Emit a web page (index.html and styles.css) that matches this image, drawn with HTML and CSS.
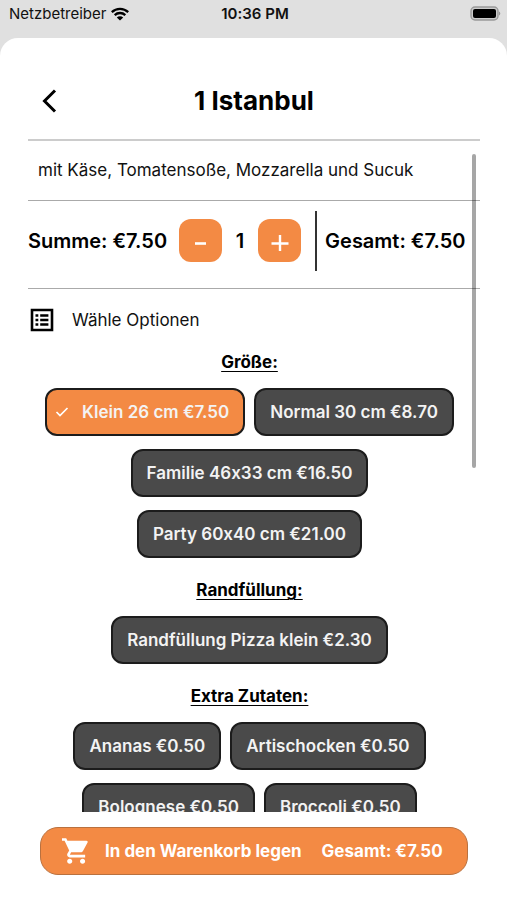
FILE: index.html
```html
<!DOCTYPE html>
<html lang="de">
<head>
<meta charset="utf-8">
<meta name="viewport" content="width=device-width, initial-scale=1">
<title>1 Istanbul</title>
<link rel="stylesheet" href="styles.css">
</head>
<body>
<div class="status">
  <div class="status-left">
    <span>Netzbetreiber</span>
    <svg class="wifi" viewBox="0 0 18 14" width="18" height="14" aria-hidden="true">
      <path d="M0.8 5.1a12 12 0 0 1 16.4 0M3.7 8.1a7.8 7.8 0 0 1 10.6 0" fill="none" stroke="#000" stroke-width="2.3"/>
      <path d="M9 13.6 5.8 10.5a4.6 4.6 0 0 1 6.4 0z"/>
    </svg>
  </div>
  <span class="time">10:36 PM</span>
  <div class="status-right">
    <svg viewBox="0 0 31 16" width="31" height="16" aria-hidden="true">
      <rect x="1" y="1" width="27" height="13" rx="4" fill="#ccc" stroke="#999" stroke-width="1.4"/>
      <rect x="3" y="3" width="23" height="9" rx="2"/>
      <path d="M29 5.5a2.2 2.2 0 0 1 0 4z" fill="#999"/>
    </svg>
  </div>
</div>
<main class="sheet">
  <header class="header">
    <button class="back" aria-label="Zurück">
      <svg viewBox="0 0 16 24" width="16" height="24" aria-hidden="true"><path d="M13 1.5 2.5 12 13 22.5" fill="none" stroke="#000" stroke-width="3"/></svg>
    </button>
    <h1>1 Istanbul</h1>
  </header>
  <div class="content">
    <p class="description">mit Käse, Tomatensoße, Mozzarella und Sucuk</p>
    <div class="amount">
      <span>Summe: €7.50</span>
      <button class="step" aria-label="Weniger"><svg viewBox="0 0 20 20" width="20" height="20" aria-hidden="true"><path d="M4 12.5h11" stroke="#fff" stroke-width="2.6"/></svg></button>
      <output class="count">1</output>
      <button class="step" aria-label="Mehr"><svg viewBox="0 0 20 20" width="20" height="20" aria-hidden="true"><path d="M1.5 12.5h17M10 4v17" stroke="#fff" stroke-width="2.4"/></svg></button>
      <span class="total">Gesamt: €7.50</span>
    </div>
    <div class="options-title">
      <svg viewBox="0 0 24 24" width="24" height="24" aria-hidden="true">
        <path d="M2 2h20v20H2z" fill="none" stroke="#000" stroke-width="2.6"/>
        <path d="M5.5 7.5h2.8M5.5 12h2.8M5.5 16.5h2.8M10.2 7.5h8.2M10.2 12h8.2M10.2 16.5h8.2" stroke="#000" stroke-width="2.4"/>
      </svg>
      <span>Wähle Optionen</span>
    </div>
    <fieldset class="group">
      <legend>Größe:</legend>
      <div class="chips">
        <label class="chip"><input type="radio" name="size" checked><svg class="check" viewBox="0 0 14 12" width="14" height="12" aria-hidden="true"><path d="M1.5 6 5 9.5 12.5 2" fill="none" stroke="#fff" stroke-width="1.7"/></svg>Klein 26 cm €7.50</label>
        <label class="chip"><input type="radio" name="size">Normal 30 cm €8.70</label>
        <label class="chip"><input type="radio" name="size">Familie 46x33 cm €16.50</label>
        <label class="chip"><input type="radio" name="size">Party 60x40 cm €21.00</label>
      </div>
    </fieldset>
    <fieldset class="group">
      <legend>Randfüllung:</legend>
      <div class="chips">
        <label class="chip"><input type="checkbox">Randfüllung Pizza klein €2.30</label>
      </div>
    </fieldset>
    <fieldset class="group">
      <legend>Extra Zutaten:</legend>
      <div class="chips">
        <label class="chip"><input type="checkbox">Ananas €0.50</label>
        <label class="chip"><input type="checkbox">Artischocken €0.50</label>
        <label class="chip"><input type="checkbox">Bolognese €0.50</label>
        <label class="chip"><input type="checkbox">Broccoli €0.50</label>
      </div>
    </fieldset>
    <div class="scrollbar"></div>
  </div>
  <footer class="footer">
    <button class="cart">
      <svg viewBox="1 2 21 20" width="27" height="26" aria-hidden="true"><path fill="#fff" d="M7 18c-1.1 0-1.99.9-1.99 2S5.9 22 7 22s2-.9 2-2-.9-2-2-2zM1 2v2h2l3.6 7.59-1.35 2.45c-.16.28-.25.61-.25.96 0 1.1.9 2 2 2h12v-2H7.42c-.14 0-.25-.11-.25-.25l.03-.12.9-1.63h7.45c.75 0 1.41-.41 1.75-1.03l3.58-6.49A1 1 0 0 0 20 4H5.21l-.94-2H1zm16 16c-1.1 0-1.99.9-1.99 2s.89 2 1.99 2 2-.9 2-2-.9-2-2-2z"/></svg>
      <span class="cart-label">In den Warenkorb legen</span>
      <span>Gesamt: €7.50</span>
    </button>
  </footer>
</main>
</body>
</html>
```
FILE: styles.css
```css
* { box-sizing: border-box; }

body {
  margin: 0;
  height: 100vh;
  display: flex;
  flex-direction: column;
  background: #e0e0e0;
  color: #111;
  font-family: Inter, "Liberation Sans", sans-serif;
  font-size: 17px;
  font-feature-settings: "calt" 0;
  line-height: 24px;
}

button {
  border: 0;
  padding: 0;
  color: inherit;
  font: inherit;
  background: none;
}

svg { display: block; flex: none; }

.status {
  display: grid;
  grid-template-columns: 1fr auto 1fr;
  align-items: center;
  height: 38px;
  padding: 0 6px 10px 9px;
  font-size: 15px;
}

.status-left { display: flex; align-items: center; gap: 5px; }
.status-right { display: flex; justify-content: flex-end; }
.time { font-weight: 600; }

.sheet {
  flex: 1;
  min-height: 0;
  display: flex;
  flex-direction: column;
  padding: 0 27px 0 28px;
  background: #fff;
  border-radius: 18px 18px 0 0;
}

.header {
  display: grid;
  grid-template-columns: 44px 1fr 44px;
  align-items: center;
  padding: 43px 0 18px;
  border-bottom: 2px solid #ccc;
}

.header h1 {
  margin: 0;
  color: #000;
  font-size: 26px;
  line-height: 40px;
  font-weight: 700;
  text-align: center;
}

.back { display: flex; justify-content: center; padding: 8px 0; }

.content {
  position: relative;
  flex: 1;
  min-height: 0;
  overflow-y: auto;
  scrollbar-width: none;
}

.description {
  margin: 0;
  padding: 17px 10px 18px;
  border-bottom: 1px solid #aaa;
}

.amount {
  display: flex;
  align-items: center;
  height: 88px;
  padding-bottom: 8px;
  border-bottom: 1px solid #aaa;
  color: #000;
  font-size: 20px;
  font-weight: 600;
  white-space: nowrap;
}

.step {
  display: flex;
  align-items: center;
  justify-content: center;
  flex: none;
  width: 43px;
  height: 43px;
  border-radius: 12px;
  background: #f38a44;
}

.step:first-of-type { margin-left: 12px; }
.count { width: 36px; text-align: center; }

.total {
  margin-left: 14px;
  padding-left: 8px;
  border-left: 2px solid #333;
  line-height: 60px;
}

.options-title {
  display: flex;
  align-items: center;
  gap: 18px;
  padding: 19px 2px 18px;
}

.group {
  min-width: 0;
  margin: 0 9px 20px 0;
  padding: 0;
  border: 0;
}

.group legend {
  margin: 0 auto 14px;
  padding: 0;
  color: #000;
  font-weight: 700;
  text-decoration: underline;
  text-decoration-thickness: 1px;
  text-underline-offset: 3px;
}

.chips {
  display: flex;
  flex-wrap: wrap;
  justify-content: center;
  gap: 13px 9px;
}

.chip {
  display: flex;
  align-items: center;
  height: 48px;
  padding: 0 14px;
  border: 2px solid #1c1c1c;
  border-radius: 12px;
  background: #4a4a4a;
  color: #f3f3f3;
  font-weight: 600;
}

.chip input {
  position: absolute;
  opacity: 0;
  pointer-events: none;
}

.chip:has(input:checked) { padding-left: 8px; background: #f38a44; }
.check { margin-right: 13px; }

.scrollbar {
  position: absolute;
  top: 13px;
  right: 4px;
  width: 4px;
  height: 314px;
  border-radius: 2px;
  background: rgba(0, 0, 0, 0.35);
}

.footer { padding: 15px 12px 25px; }

.cart {
  display: flex;
  align-items: center;
  width: 100%;
  height: 48px;
  padding: 0 21px;
  border: 1px solid #b9713f;
  border-radius: 18px;
  background: #f38a44;
  color: #fff;
  font-weight: 700;
  white-space: nowrap;
}

.cart-label { margin: 0 20px 0 16px; }
```
